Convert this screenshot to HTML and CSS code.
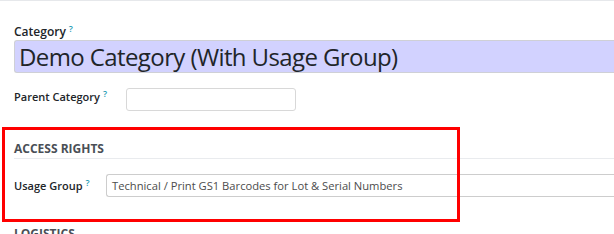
FILE: index.html
```
<!DOCTYPE html>
<html lang="en">
<head>
    <meta charset="UTF-8">
    <meta name="viewport" content="width=device-width, initial-scale=1.0">
    <title>Product Category</title>
    <link rel="stylesheet" href="styles.css">
</head>
<body>
    <div class="topbar"></div>
    <div class="sheet">
        <div class="field-label">Category<sup>?</sup></div>
        <div class="name-input">Demo Category (With Usage Group)</div>

        <div class="row parent-row">
            <div class="row-label">Parent Category<sup>?</sup></div>
            <div class="small-input"></div>
        </div>

        <div class="group">
            <div class="group-title">ACCESS RIGHTS</div>
            <div class="row usage-row">
                <div class="row-label">Usage Group<sup>?</sup></div>
                <div class="wide-input">Technical / Print GS1 Barcodes for Lot &amp; Serial Numbers</div>
            </div>
        </div>

        <div class="group-title next">LOGISTICS</div>
    </div>
    <div class="highlight"></div>
</body>
</html>
```

FILE: styles.css
```
body {
    margin: 0;
    font-family: "Open Sans", "Noto Sans", sans-serif;
    color: #212529;
    background-color: #fff;
    overflow: hidden;
    height: 234px;
}

.topbar {
    height: 1px;
    background-color: #e6e8eb;
}

.sheet {
    padding-left: 14px;
}

sup {
    color: #1d9bb4;
    font-size: 9px;
    font-weight: 600;
    margin-left: 3px;
    vertical-align: top;
    position: relative;
    top: -3px;
}

.field-label {
    margin-top: 22px;
    font-size: 12px;
    font-weight: 600;
    line-height: 17px;
    color: #212529;
}

.name-input {
    margin-top: 0;
    height: 31px;
    line-height: 31px;
    padding-left: 4px;
    font-size: 24px;
    letter-spacing: -0.6px;
    background-color: #d2d2ff;
    border: 1px solid #cfd0d6;
    border-right: none;
    border-radius: 3px 0 0 3px;
    white-space: nowrap;
}

.row {
    display: flex;
    align-items: flex-start;
}

.row-label {
    font-size: 11px;
    font-weight: 600;
    line-height: 16px;
    white-space: nowrap;
}

.parent-row {
    margin-top: 15px;
}

.parent-row .row-label {
    width: 112px;
    padding-top: 1px;
}

.small-input {
    width: 168px;
    height: 21px;
    border: 1px solid #d8d8d8;
    border-radius: 3px;
}

.group-title {
    margin-top: 30px;
    font-size: 12px;
    font-weight: 700;
    color: #4a4f56;
    line-height: 16px;
    padding-bottom: 1px;
    border-bottom: 1px solid #e9ebee;
}

.usage-row {
    margin-top: 15px;
}

.usage-row .row-label {
    width: 92px;
    padding-top: 4px;
}

.wide-input {
    flex: 1;
    height: 21px;
    line-height: 21px;
    padding-left: 5px;
    font-size: 11.2px;
    color: #4c4c4c;
    border: 1px solid #cdcdcd;
    border-right: none;
    border-radius: 3px 0 0 3px;
    white-space: nowrap;
}

.group-title.next {
    margin-top: 29px;
    border-bottom: none;
}

.highlight {
    position: absolute;
    left: 2px;
    top: 127px;
    width: 452px;
    height: 89px;
    border: 3px solid #ff0000;
}
```
